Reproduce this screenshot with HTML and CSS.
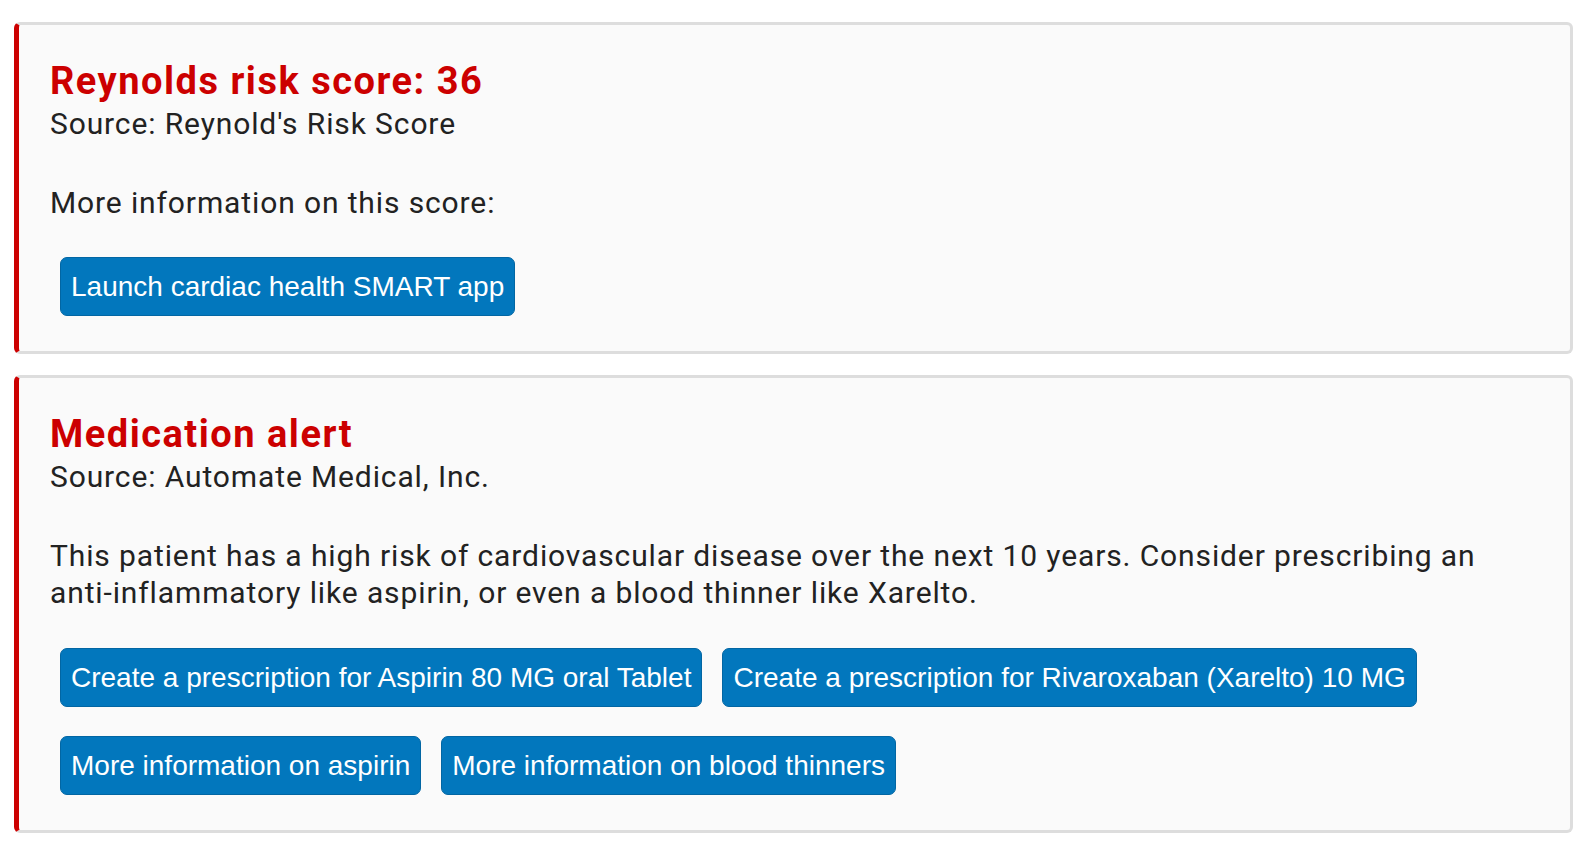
FILE: index.html
```html
<!DOCTYPE html>
<html lang="en">
<head>
<meta charset="utf-8">
<title>Cards</title>
<link rel="stylesheet" href="styles.css">
</head>
<body>
<main class="cards">
  <section class="card">
    <h2 class="card-title">Reynolds risk score: 36</h2>
    <div class="card-source">Source: Reynold's Risk Score</div>
    <p class="card-detail">More information on this score:</p>
    <div class="card-actions">
      <button class="btn">Launch cardiac health SMART app</button>
    </div>
  </section>
  <section class="card">
    <h2 class="card-title">Medication alert</h2>
    <div class="card-source">Source: Automate Medical, Inc.</div>
    <p class="card-detail">This patient has a high risk of cardiovascular disease over the next 10 years. Consider prescribing an anti-inflammatory like aspirin, or even a blood thinner like Xarelto.</p>
    <div class="card-actions">
      <button class="btn">Create a prescription for Aspirin 80 MG oral Tablet</button>
      <button class="btn">Create a prescription for Rivaroxaban (Xarelto) 10 MG</button>
      <button class="btn">More information on aspirin</button>
      <button class="btn">More information on blood thinners</button>
    </div>
  </section>
</main>
</body>
</html>
```

FILE: styles.css
```css
html, body {
  margin: 0;
  padding: 0;
  background: #ffffff;
}

body {
  font-family: Roboto, "Liberation Sans", sans-serif;
  color: #222222;
}

.cards {
  display: flex;
  flex-direction: column;
  gap: 21px;
  padding: 22px 16px 16px 14px;
}

.card {
  background: #fafafa;
  border: 3px solid #dddddd;
  border-left: 5px solid #cc0000;
  border-radius: 6px;
  padding: 36px 40px 25px 31px;
}

.card-title {
  margin: 0 0 4px 0;
  font-size: 38px;
  line-height: 40px;
  font-weight: 700;
  letter-spacing: 1.5px;
  color: #cc0000;
}

.card-source {
  font-size: 30px;
  line-height: 37.5px;
  letter-spacing: 0.88px;
}

.card-detail {
  margin: 41px 0 0 0;
  font-size: 30px;
  line-height: 37.5px;
  letter-spacing: 0.88px;
}

.card-actions {
  display: flex;
  flex-wrap: wrap;
  column-gap: 20px;
  row-gap: 29px;
  margin-top: 36px;
  padding: 0 0 10px 10px;
}

.btn {
  font-family: "Liberation Sans", Arial, sans-serif;
  font-size: 28px;
  line-height: 33px;
  color: #ffffff;
  background: #0277bd;
  border: 1px solid #0266a3;
  border-radius: 7px;
  padding: 12px 10px;
  margin: 0;
  cursor: pointer;
}
```
